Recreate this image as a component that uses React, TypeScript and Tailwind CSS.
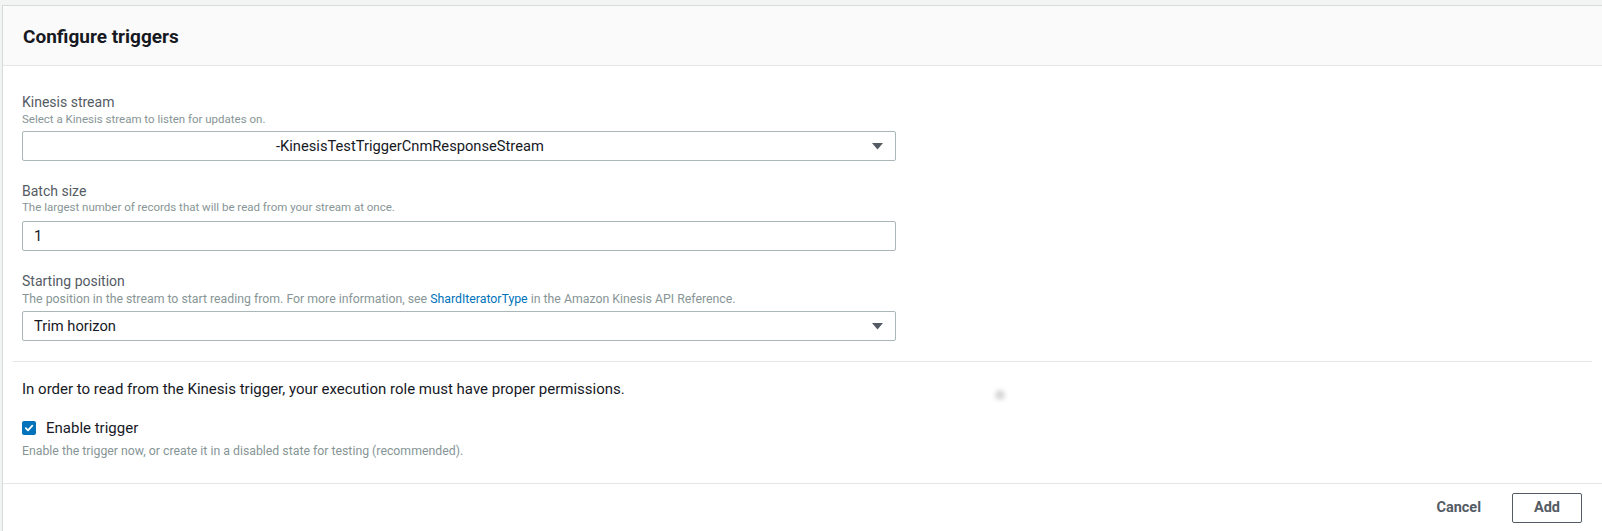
import React from "react";

const font = { fontFamily: "Roboto, 'Noto Sans', sans-serif" };

function Caret() {
  return (
    <svg width="11" height="7" viewBox="0 0 11 7" className="shrink-0">
      <path d="M0 0 H11 L5.5 6.5 Z" fill="#545b64" />
    </svg>
  );
}

export default function App() {
  return (
    <div className="w-[1602px] h-[531px] overflow-hidden bg-[#f2f3f3] pt-[5px] pl-[2px]" style={font}>
      <div className="relative h-[526px] bg-white border-l border-t border-[#d5dbdb] flex flex-col">
        <div className="h-[60px] bg-[#fafafa] border-b border-[#e4e7e7] flex items-center pl-[20px]">
          <h2 className="text-[19px] font-bold text-[#16191f] leading-[24px] pt-[2px]">Configure triggers</h2>
        </div>
        <div className="pl-[19px] pt-[26px]">
          <div className="text-[14px] leading-[20px] text-[#545b64]">Kinesis stream</div>
          <div className="text-[11.5px] leading-[16px] text-[#879596] mt-[-1px]">Select a Kinesis stream to listen for updates on.</div>
          <div className="mt-[4px] w-[874px] h-[30px] border border-[#aab7b8] rounded-[2px] flex items-center pr-[12px]">
            <span className="pl-[253px] flex-1 text-[14.7px] text-[#16191f]">-KinesisTestTriggerCnmResponseStream</span>
            <Caret />
          </div>

          <div className="mt-[20px] text-[14px] leading-[20px] text-[#545b64]">Batch size</div>
          <div className="text-[11.5px] leading-[16px] text-[#879596] mt-[-2px]">The largest number of records that will be read from your stream at once.</div>
          <div className="mt-[6px] w-[874px] h-[30px] border border-[#aab7b8] rounded-[2px] flex items-center pl-[11px] text-[14.7px] text-[#16191f]">
            1
          </div>

          <div className="mt-[20px] text-[14px] leading-[20px] text-[#545b64]">Starting position</div>
          <div className="text-[12.3px] leading-[16px] text-[#879596] mt-[0px]">
            The position in the stream to start reading from. For more information, see{" "}
            <span className="text-[#0073bb]">ShardIteratorType</span> in the Amazon Kinesis API Reference.
          </div>
          <div className="mt-[4px] w-[874px] h-[30px] border border-[#aab7b8] rounded-[2px] flex items-center pl-[11px] pr-[12px]">
            <span className="flex-1 text-[14.7px] text-[#16191f]">Trim horizon</span>
            <Caret />
          </div>
        </div>

        <div className="mx-[10px] mt-[20px] border-t border-[#e4e7e7]" />

        <div className="pl-[19px] pt-[17px]">
          <div className="text-[15px] leading-[20px] text-[#16191f]">
            In order to read from the Kinesis trigger, your execution role must have proper permissions.
          </div>
          <div className="mt-[19px] flex items-center gap-[10px] h-[20px]">
            <div className="w-[14px] h-[14px] rounded-[2px] bg-[#0073bb] flex items-center justify-center">
              <svg width="10" height="10" viewBox="0 0 10 10">
                <path d="M1.8 5.2 L4 7.4 L8.3 2.6" stroke="white" strokeWidth="1.8" fill="none" strokeLinecap="round" strokeLinejoin="round" />
              </svg>
            </div>
            <span className="text-[15px] text-[#16191f]">Enable trigger</span>
          </div>
          <div className="mt-[5px] text-[12.3px] leading-[16px] text-[#879596]">
            Enable the trigger now, or create it in a disabled state for testing (recommended).
          </div>
        </div>

        <div className="mt-[24px] border-t border-[#e4e7e7] flex items-center justify-end pr-[20px] pt-[9px] gap-[31px]">
          <span className="text-[14.5px] font-bold text-[#545b64]">Cancel</span>
          <div className="w-[70px] h-[30px] border border-[#545b64] rounded-[2px] flex items-center justify-center text-[14.5px] font-bold text-[#545b64]">
            Add
          </div>
        </div>

        <div className="absolute left-[992px] top-[384px] w-[10px] h-[10px] rounded-full bg-[#d8d8d8] blur-[2px]" />
      </div>
    </div>
  );
}
